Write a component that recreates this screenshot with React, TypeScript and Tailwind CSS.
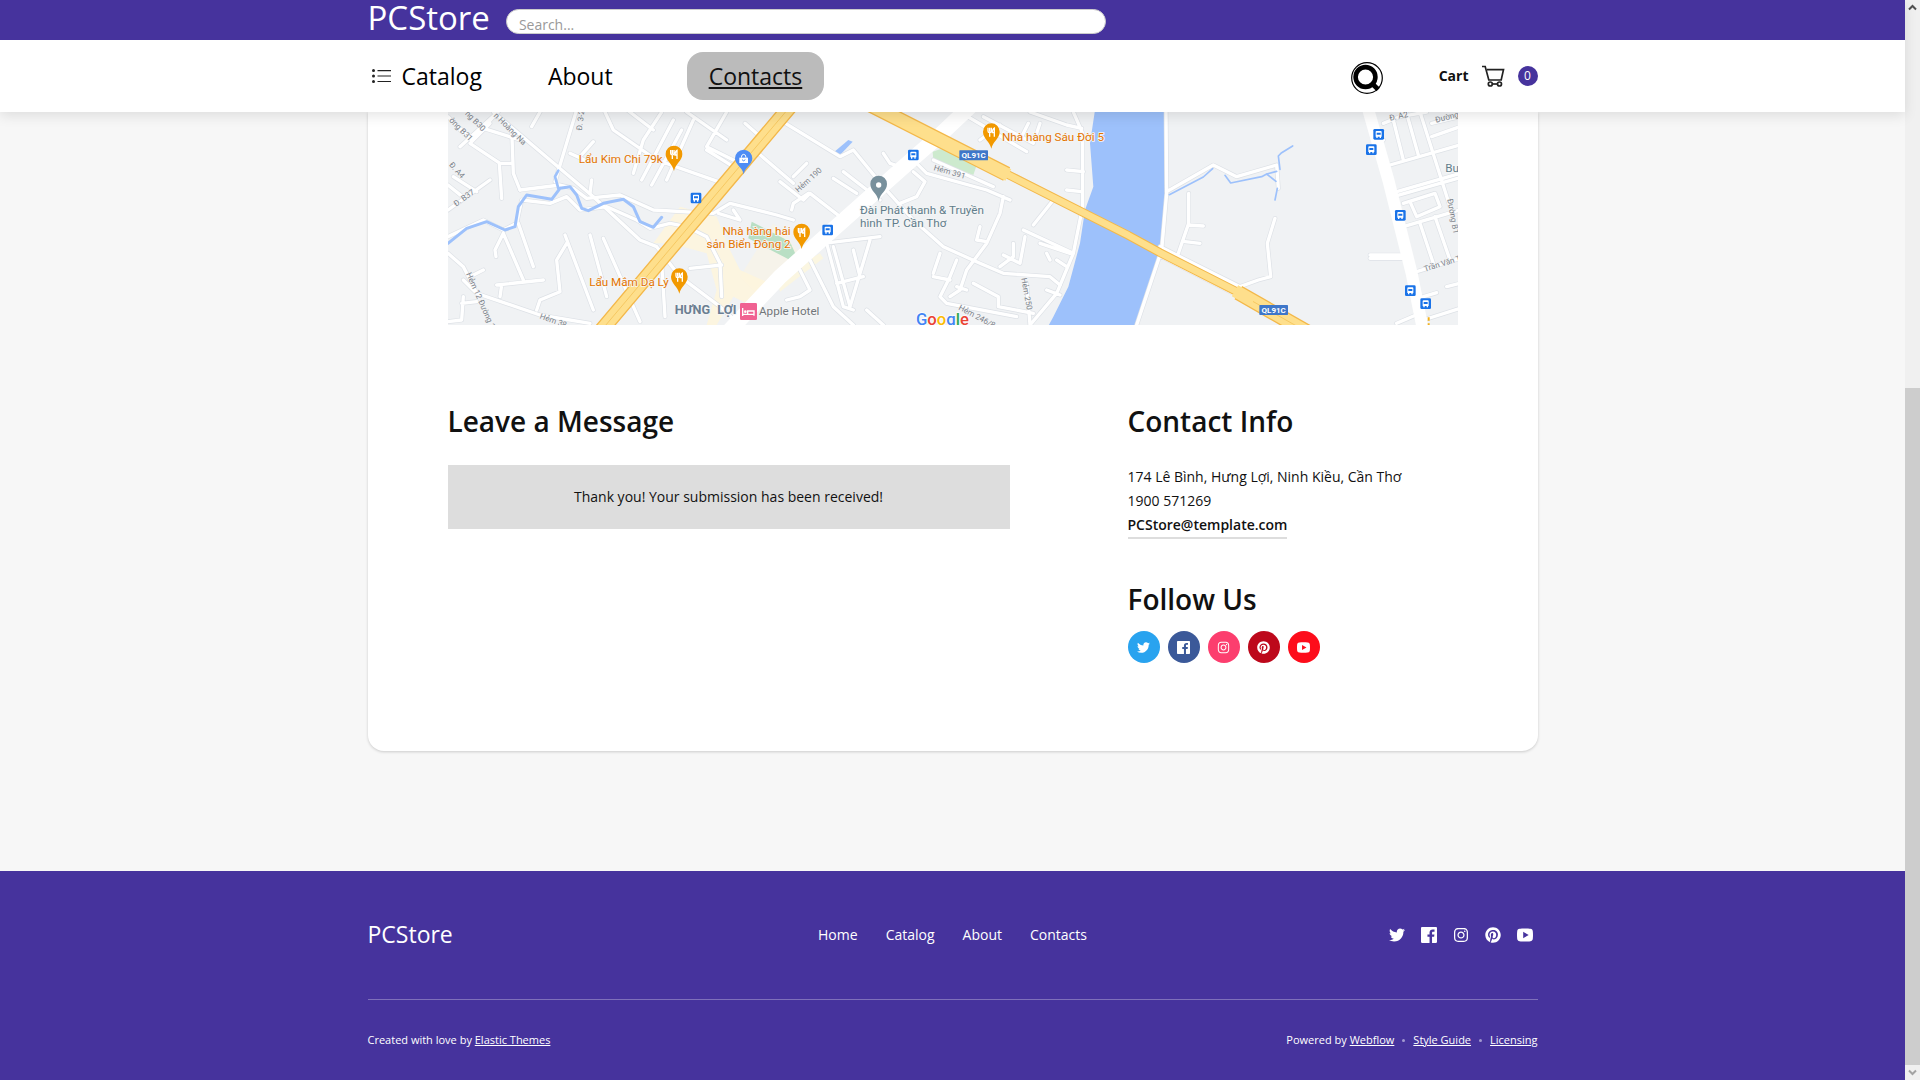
import React from 'react';
import { FaTwitter, FaInstagram, FaPinterest } from 'react-icons/fa';

type IconProps = { className?: string };

function FacebookIcon({ className }: IconProps) {
  return (
    <svg viewBox="0 0 24 24" fill="currentColor" className={className} aria-hidden="true">
      <path d="M22.676 0H1.324C.593 0 0 .593 0 1.324v21.352C0 23.408.593 24 1.324 24h11.494v-9.294H9.689v-3.621h3.129V8.41c0-3.099 1.894-4.785 4.659-4.785 1.325 0 2.464.097 2.796.141v3.24h-1.921c-1.5 0-1.792.721-1.792 1.771v2.311h3.584l-.465 3.63H16.56V24h6.115c.733 0 1.325-.592 1.325-1.324V1.324C24 .593 23.408 0 22.676 0" />
    </svg>
  );
}

function YoutubeIcon({ className }: IconProps) {
  return (
    <svg viewBox="0 0 24 24" fill="currentColor" className={className} aria-hidden="true">
      <path
        fillRule="evenodd"
        d="M4 2.8C7 2.2 17 2.2 20 2.8c2.600.5 3.400 1.700 3.700 3.700.4 3 .4 8 0 11-.3 2-1.100 3.200-3.700 3.700-3 .6-13 .6-16 0C1.400 20.700.6 19.500.3 17.500c-.4-3-.4-8 0-11C.6 4.500 1.400 3.300 4 2.800ZM9.300 7.200v9.600l8.200-4.800Z"
      />
    </svg>
  );
}

function ListIcon({ className }: IconProps) {
  return (
    <svg viewBox="0 0 20 16" className={className} aria-hidden="true">
      <g fill="#222">
        <circle cx="1.500" cy="2.500" r="1.500" />
        <circle cx="1.500" cy="8" r="1.500" />
        <circle cx="1.500" cy="13.500" r="1.500" />
        <path d="M5.500 2H19v1.200H5.500zM5.500 7.400H19v1.200H5.500zM5.500 12.900H19v1.200H5.500z" />
      </g>
    </svg>
  );
}

function CartIcon({ className }: IconProps) {
  return (
    <svg viewBox="0 0 24 24" fill="none" stroke="#222" strokeWidth="1.700" className={className} aria-hidden="true">
      <path d="M1 2.500h3.200l3.600 13.500h12.400L22.500 5.700H6" />
      <circle cx="9.300" cy="20" r="2" />
      <circle cx="18.500" cy="20" r="2" />
      <path d="M11.300 20h5.200" />
    </svg>
  );
}

function SearchIcon({ className }: IconProps) {
  return (
    <svg viewBox="0 0 32 32" fill="none" stroke="#000" className={className} aria-hidden="true">
      <circle cx="16" cy="16" r="15.300" strokeWidth="1.200" />
      <circle cx="14.500" cy="15" r="9.900" strokeWidth="4.600" />
      <path d="M21 21.500l6.200 6" strokeWidth="4.800" />
    </svg>
  );
}

const socials = [
  { name: 'Twitter', Icon: FaTwitter, color: 'bg-[#29a3ef]' },
  { name: 'Facebook', Icon: FacebookIcon, color: 'bg-[#3b5999]' },
  { name: 'Instagram', Icon: FaInstagram, color: 'bg-[#fc3e6e]' },
  { name: 'Pinterest', Icon: FaPinterest, color: 'bg-[#bd081b]' },
  { name: 'YouTube', Icon: YoutubeIcon, color: 'bg-[#fd0d1b]' },
];

const streets = [
  'M24 20L95 90M95 90L60 60M100 85L165 15M60 110L180 0M130 55L240 90M160 6L460 260L600 390L650 410L720 500L840 590L900 645',
  'M150 40L90 100L180 160H215M215 55L220 190L240 240M178 160L185 265M24 300L150 210M24 225L70 262M40 200L110 245M300 6L275 50',
  'M240 240L360 225L400 235L440 265L540 255L640 300L820 310L870 280L1010 315L1060 330M24 380L130 330L190 360L230 340L245 270L330 280L380 260L420 300L500 290L590 330L630 355L690 340L740 350L800 380L840 460L845 560',
  'M408 6L345 215M390 130L445 155M420 140L460 95M455 210L450 250M495 6L520 60L650 150L835 215M562 0L640 60M665 6L610 90L580 190M700 30L605 210M725 60L635 225M760 30L680 210M740 6L860 90M860 6L800 110L880 150M800 120L880 170',
  'M190 370L165 420L168 440M190 370L250 510M235 340L280 470M375 375L460 600M450 375L500 560M490 385L600 635M665 460L675 620M750 475L845 465M24 430L70 470L110 550L70 510M110 550L300 615L450 640M170 525L310 510M180 560L185 525M290 600L300 570L360 545L350 450L380 400M24 635L65 630L70 560M65 580L110 575M130 480L90 500',
  'M915 40L955 75M955 130L1060 220M835 310L900 330L880 300',
  'M1020 30L1200 140L1240 120L1330 230L1420 330L1510 410L1620 460L1690 490L1830 500L1860 525M1020 215L1090 270L1110 250L1200 320M1055 300L1060 280L1105 250M1060 200L1100 160M1180 205L1250 250M1210 185L1320 270M1330 130L1350 160L1380 170M1420 185L1455 215L1430 260L1380 280',
  'M1410 140L1460 190L1640 240L1710 270M1480 150L1660 230M1690 260L1680 310L1640 400L1580 480L1560 540L1530 560M1620 350L1610 390L1640 395M1500 430L1480 490M1550 450L1530 500L1500 560L1520 580L1730 620M1480 500L1530 510M1550 530L1580 540M1600 520L1675 560V590L1780 610',
  'M1150 400L1320 380M1180 410L1230 590L1290 390M1240 420L1260 500M1190 520L1270 500M1160 400L1210 590L1240 600M1080 480L1110 540L1080 560L1040 570M1110 450L1180 590L1240 645M1280 600L1330 645',
  'M1560 6L1760 125M1630 20L1780 100L1800 40M1620 90L1680 45M1770 6L1880 45L1925 55M1765 40L1740 90L1720 85M1900 6L1928 70V290L1900 430L1850 550L1770 645M1750 360L1900 430M1840 270L1780 345M1800 400L1890 430M1880 180L1930 185M1880 240L1925 245M1710 190L1920 300M1720 400V440L1680 470M1690 435L1740 460L1755 380M1760 520L1770 645M1820 540L1860 555M1850 450L1880 470M1820 430L1830 450',
  'M2178 6L2180 250L2165 420L2090 645M2180 245L2320 165L2390 200L2510 165L2515 235M2246 250V340L2215 430M2246 345L2290 348M2235 395L2280 400M2160 410L2400 530M2165 440L2390 555M2505 325L2482 400L2492 500L2455 510L2400 530',
  'M2790 435H2890M2790 445H2890M2830 40L2880 20L2960 6M2860 30L2890 150M2900 10L2935 135M2940 6L3030 290M2850 165L3060 105M2860 248L3060 190M2860 260L3060 203M2975 40L3060 20M2975 80L3060 50M2890 280L2985 250L3000 290L2930 320L2910 275M2890 350L3060 300M2940 340L2980 460M2985 320L3030 450M2930 485L3060 445M2950 560L2990 548M3020 530L3060 520M2950 630L3060 595M2870 640L2940 610M2810 110L2830 90',
];

const streams = [
  'M24 400L80 355L140 335L195 360L225 350L235 290L260 255L335 268L360 235L390 230L410 255L425 295L445 302L490 280L550 268L580 290L600 335L640 352L665 322',
  'M355 182L345 200L355 235',
  'M2188 254L2290 201L2318 176M2355 196L2372 219L2465 200L2480 192L2510 184M2480 192L2508 214M2512 235L2505 270M2520 178L2515 138L2525 128L2558 108',
];

const busStops = [
  [768, 264], [1420, 135], [1163, 360], [2816, 73], [2794, 119], [2881, 316], [2911, 542], [2957, 581],
];

const foodPins = [[702, 135], [718, 503], [1085, 369], [1654, 68]];

const streetNames = [
  { x: 26, y: 32, r: 45, t: 'ờng B31' },
  { x: 74, y: 12, r: 45, t: 'ng B30' },
  { x: 160, y: 18, r: 45, t: 'n Hoàng Na' },
  { x: 26, y: 165, r: 48, t: 'Đ. A4' },
  { x: 48, y: 290, r: -35, t: 'Đ. B37' },
  { x: 425, y: 62, r: -82, t: 'Đ. 3-2' },
  { x: 78, y: 492, r: 66, t: 'Hẻm 12 Đường 3 Th' },
  { x: 298, y: 625, r: 20, t: 'Hẻm 38' },
  { x: 1075, y: 248, r: -42, t: 'Hẻm 190' },
  { x: 1480, y: 180, r: 16, t: 'Hẻm 391' },
  { x: 1744, y: 505, r: 80, t: 'Hẻm 250' },
  { x: 1554, y: 598, r: 28, t: 'Hẻm 246/8' },
  { x: 2850, y: 32, r: -12, t: 'Đ. A2' },
  { x: 2988, y: 38, r: -14, t: 'Đường B' },
  { x: 3022, y: 268, r: 80, t: 'Đường B1' },
];

function FoodPin({ x, y }: { x: number; y: number }) {
  return (
    <g transform={`translate(${x} ${y})`}>
      <path d="M0 48C-4 26-25 18-25-3a25 25 0 0 1 50 0C25 18 4 26 0 48Z" fill="#f29900" />
      <path d="M-10-15v10q0 5 5 5v12M-5-15v12M0-15v10q0 5-5 5M9 12v-26q-6 3-6 14h6" fill="none" stroke="#fff" strokeWidth="4" />
    </g>
  );
}

function BusStop({ x, y }: { x: number; y: number }) {
  return (
    <g transform={`translate(${x} ${y})`}>
      <rect x="-16" y="-16" width="32" height="32" rx="4" fill="#1a73e8" />
      <path fillRule="evenodd" d="M-9-8q0-2 3-2H6q3 0 3 2V7H7v4H3V7h-6v4h-4V7h-2ZM-6-5V1H6v-6Z" fill="#fff" />
    </g>
  );
}

function RouteShield({ x, y }: { x: number; y: number }) {
  return (
    <g transform={`translate(${x} ${y})`}>
      <rect x="-43" y="-15" width="86" height="30" rx="2" fill="#3f77c9" />
      <text y="9" textAnchor="middle" fontSize="24" fontWeight="700" fill="#fff">QL91C</text>
    </g>
  );
}

function StoreMap() {
  return (
    <svg
      viewBox="24 6 3030 639"
      role="img"
      aria-label="Store location map"
      className="block h-auto w-full font-['Roboto',sans-serif]"
    >
      <rect x="24" y="6" width="3030" height="639" fill="#f0f2f4" />
      <g fill="#fef6dc">
        <path d="M720 290L830 320L870 420L900 480L990 520L960 600L880 560L830 645H800L830 540L800 430L690 400L640 400Z" opacity=".85" />
        <path d="M1000 340L1090 440L960 560L900 500Z" opacity=".4" />
        <path d="M1010 500L1140 430L1150 445L1020 545Z" opacity=".8" />
      </g>
      <path d="M935 335L1050 395L1070 440L1050 450L925 385Z" fill="#b9dfc4" />
      <path d="M1478 125L1500 118L1545 120L1612 160L1600 195L1480 150Z" fill="#cdeace" />
      <path d="M1965 0L1950 100L1960 230L1935 300L1920 400L1885 530L1840 620L1824 650H2090L2160 425L2175 250L2173 0Z" fill="#9dc1fb" />
      <path d="M1178 130L1225 90L1238 95L1195 140Z" fill="#9dc1fb" />
      <g fill="none" strokeLinejoin="round" strokeLinecap="round">
        <g stroke="#dde1e6" strokeWidth="14">
          {streets.map((d) => <path key={d} d={d} />)}
        </g>
        <g stroke="#fff" strokeWidth="10">
          {streets.map((d) => <path key={d} d={d} />)}
        </g>
        <path d={streams[0]} stroke="#9dc1fb" strokeWidth="9" />
        <path d={streams[1]} stroke="#9dc1fb" strokeWidth="8" />
        <path d={streams[2]} stroke="#9dc1fb" strokeWidth="5" />
        <path d="M1590 -10L1500 75L1420 145L1020 500L870 660" stroke="#fff" strokeWidth="46" />
        <path d="M2785 0L2845 210L2915 490L2948 655" stroke="#fff" strokeWidth="36" />
        <path d="M1700 192L2065 376L2160 428L2400 550" stroke="#f3b84a" strokeWidth="26" />
        <path d="M1290 -16L1700 192M2395 548L2600 665M1050 -10L485 660" stroke="#f3b84a" strokeWidth="46" strokeLinecap="butt" />
        <path d="M1700 192L2065 376L2160 428L2400 550" stroke="#fedf8c" strokeWidth="20" />
        <path d="M1290 -16L1705 195M2385 542L2600 665M1050 -10L485 660" stroke="#fedf8c" strokeWidth="38" strokeLinecap="butt" />
        <path d="M1050 -10L485 660M2440 575L2600 665" stroke="#f6c862" strokeWidth="3" />
      </g>
      <path d="M2966 622v10M2966 640v8" stroke="#f2b11c" strokeWidth="6" />

      <g fill="#7b828a" fontSize="24" stroke="#f4f5f6" strokeWidth="3" paintOrder="stroke">
        {streetNames.map((s) => (
          <text key={s.t} transform={`translate(${s.x} ${s.y}) rotate(${s.r})`}>{s.t}</text>
        ))}
        <text transform="translate(2955 485) rotate(-17)" fontSize="24">Trần Văn T</text>
      </g>

      {busStops.map(([x, y]) => <BusStop key={`${x}-${y}`} x={x} y={y} />)}
      {foodPins.map(([x, y]) => <FoodPin key={`${x}-${y}`} x={x} y={y} />)}
      <RouteShield x={1601} y={136} />
      <RouteShield x={2501} y={600} />

      <g transform="translate(911 147)">
        <path d="M0 46C-4 24-26 18-26-2a26 26 0 0 1 52 0C26 18 4 24 0 46Z" fill="#4e8df5" />
        <path d="M-13-4h26v16h-26z" fill="#fff" />
        <path d="M-7-4q0-10 7-10t7 10" fill="none" stroke="#fff" strokeWidth="3" />
        <path d="M-5 2q5 7 10 0" fill="none" stroke="#4e8df5" strokeWidth="3" />
      </g>
      <g transform="translate(1316 224)">
        <path d="M0 50C-4 24-25 20-25-2a25 25 0 0 1 50 0C25 20 4 24 0 50Z" fill="#78909c" />
        <circle cy="1" r="8" fill="#fff" />
      </g>
      <rect x="900" y="579" width="51" height="51" rx="4" fill="#f06292" />
      <path d="M908 594v24M908 613h34M942 617v-14h-19v9" stroke="#fff" strokeWidth="4" fill="none" />
      <circle cx="916" cy="605" r="4" fill="#fff" />

      <g fontSize="35" stroke="#f6f6f6" strokeWidth="5" paintOrder="stroke">
        <g fill="#e37400">
          <text x="668" y="159" textAnchor="end">Lẩu Kim Chi 79k</text>
          <text x="686" y="528" textAnchor="end">Lẩu Mắm Dạ Lý</text>
          <text x="1052" y="374" textAnchor="end">Nhà hàng hải</text>
          <text x="1052" y="414" textAnchor="end">sản Biển Đông 2</text>
          <text x="1686" y="94">Nhà hàng Sáu Đời 5</text>
        </g>
        <g fill="#607d8b">
          <text x="1260" y="311">Đài Phát thanh &amp; Truyền</text>
          <text x="1260" y="351">hình TP. Cần Thơ</text>
          <text x="3016" y="185">Bu</text>
        </g>
        <g fill="#6b7f93" fontWeight="700" fontSize="38">
          <text x="704" y="611">HƯNG</text>
          <text x="832" y="611">LỢI</text>
        </g>
        <text x="957" y="614" fill="#70757a">Apple Hotel</text>
      </g>
      <text x="1428" y="645" fontSize="50" fontWeight="500" stroke="#fff" strokeWidth="4" paintOrder="stroke">
        <tspan fill="#4285f4">G</tspan>
        <tspan fill="#ea4335">o</tspan>
        <tspan fill="#fbbc05">o</tspan>
        <tspan fill="#4285f4">g</tspan>
        <tspan fill="#34a853">l</tspan>
        <tspan fill="#ea4335">e</tspan>
      </text>
    </svg>
  );
}

function Header() {
  return (
    <header className="sticky top-0 z-10 bg-white shadow-[0_4px_12px_rgba(0,0,0,0.1)]">
      <div className="h-10 bg-[#46339d]">
        <div className="mx-auto flex max-w-[1170px] gap-4">
          <a href="#home" className="text-[33px] leading-9 text-white">PCStore</a>
          <input
            type="search"
            aria-label="Search"
            placeholder="Search..."
            className="mt-[9px] h-[25px] w-[600px] rounded-full border border-[#ccc] bg-white px-3 pt-[6px] text-sm text-[#222] outline-none placeholder:text-[#999]"
          />
        </div>
      </div>
      <div className="mx-auto flex h-[72px] max-w-[1170px] items-center justify-between">
        <nav className="flex items-center text-[23px] text-black">
          <a href="#catalog" className="flex items-center gap-[10px] pl-1">
            <ListIcon className="h-4 w-5" />
            Catalog
          </a>
          <a href="#about" className="ml-11 px-[22px]">About</a>
          <a href="#contacts" className="ml-[52px] flex h-12 items-center rounded-2xl bg-[#bbb] px-[22px] text-[#111] underline">
            Contacts
          </a>
        </nav>
        <div className="flex items-center">
          <button type="button" aria-label="Search" className="mt-1 mr-14">
            <SearchIcon className="size-8" />
          </button>
          <button type="button" className="flex items-center text-sm font-bold text-[#111]">
            Cart
            <CartIcon className="mr-[13px] ml-3 size-6" />
            <span className="flex size-5 items-center justify-center rounded-full bg-[#46339d] text-xs font-normal text-white">
              0
            </span>
          </button>
        </div>
      </div>
    </header>
  );
}

function ContactCard() {
  return (
    <main className="mx-auto mb-[120px] w-full max-w-[1170px] rounded-b-2xl bg-white px-20 pb-[88px] shadow-[0_1px_3px_rgba(0,0,0,0.18)]">
      <StoreMap />
      <div className="mt-[78px] flex justify-between text-[#111]">
        <section className="w-[562px]">
          <h2 className="text-[28px] leading-9 font-semibold">Leave a Message</h2>
          <p role="status" className="mt-[26px] bg-[#ddd] p-5 text-center text-sm leading-6">
            Thank you! Your submission has been received!
          </p>
        </section>
        <div className="w-[330px]">
          <section>
            <h2 className="text-[28px] leading-9 font-semibold">Contact Info</h2>
            <address className="mt-[26px] flex flex-col items-start text-sm leading-6 not-italic">
              <span>174 Lê Bình, Hưng Lợi, Ninh Kiều, Cần Thơ</span>
              <span>1900 571269</span>
              <a href="mailto:PCStore@template.com" className="border-b-2 border-[#ddd] font-semibold">
                PCStore@template.com
              </a>
            </address>
          </section>
          <section className="mt-[42px]">
            <h2 className="text-[28px] leading-9 font-semibold">Follow Us</h2>
            <div className="mt-[14px] flex gap-2">
              {socials.map(({ name, Icon, color }) => (
                <a
                  key={name}
                  href={`#${name.toLowerCase()}`}
                  aria-label={name}
                  className={`flex size-8 items-center justify-center rounded-full text-white ${color}`}
                >
                  <Icon className="size-[13px]" />
                </a>
              ))}
            </div>
          </section>
        </div>
      </div>
    </main>
  );
}

function Footer() {
  return (
    <footer className="mt-auto bg-[#46339d] text-white">
      <div className="mx-auto max-w-[1170px]">
        <div className="box-content grid h-32 grid-cols-[1fr_auto_1fr] items-center border-b border-[#7e70ba]">
          <a href="#home" className="pb-[3px] text-[23px] leading-8">PCStore</a>
          <nav className="flex gap-7 text-sm">
            <a href="#home">Home</a>
            <a href="#catalog">Catalog</a>
            <a href="#about">About</a>
            <a href="#contacts">Contacts</a>
          </nav>
          <div className="mr-[5px] flex justify-end gap-4">
            {socials.map(({ name, Icon }) => (
              <a key={name} href={`#${name.toLowerCase()}`} aria-label={name}>
                <Icon className="size-4" />
              </a>
            ))}
          </div>
        </div>
        <div className="flex h-20 items-center justify-between text-[11px]">
          <p>
            Created with love by <a href="#elastic" className="underline">Elastic Themes</a>
          </p>
          <div className="flex items-center gap-2">
            <p>
              Powered by <a href="#webflow" className="underline">Webflow</a>
            </p>
            <span className="size-[3px] rounded-full bg-[#a299d0]" />
            <a href="#style-guide" className="underline">Style Guide</a>
            <span className="size-[3px] rounded-full bg-[#a299d0]" />
            <a href="#licensing" className="underline">Licensing</a>
          </div>
        </div>
      </div>
    </footer>
  );
}

function PageScrollbar() {
  return (
    <div aria-hidden="true" className="sticky top-0 flex h-screen w-[15px] flex-col bg-[#f0f0f0]">
      <svg viewBox="0 0 15 15" className="h-[15px] w-[15px]">
        <path d="M4 9.500L7.500 6L11 9.500" fill="none" stroke="#505050" strokeWidth="2" />
      </svg>
      <div className="flex-[373_1_0%]" />
      <div className="flex-[677_1_0%] bg-[#cdcdcd]" />
      <svg viewBox="0 0 15 15" className="h-[15px] w-[15px]">
        <path d="M4 5.500L7.500 9L11 5.500" fill="none" stroke="#a3a3a3" strokeWidth="2" />
      </svg>
    </div>
  );
}

export default function App() {
  return (
    <div className="flex items-start bg-[#f7f7f7] font-['Open_Sans',sans-serif]">
      <div className="flex min-h-screen min-w-0 flex-1 flex-col">
        <Header />
        <ContactCard />
        <Footer />
      </div>
      <PageScrollbar />
    </div>
  );
}
